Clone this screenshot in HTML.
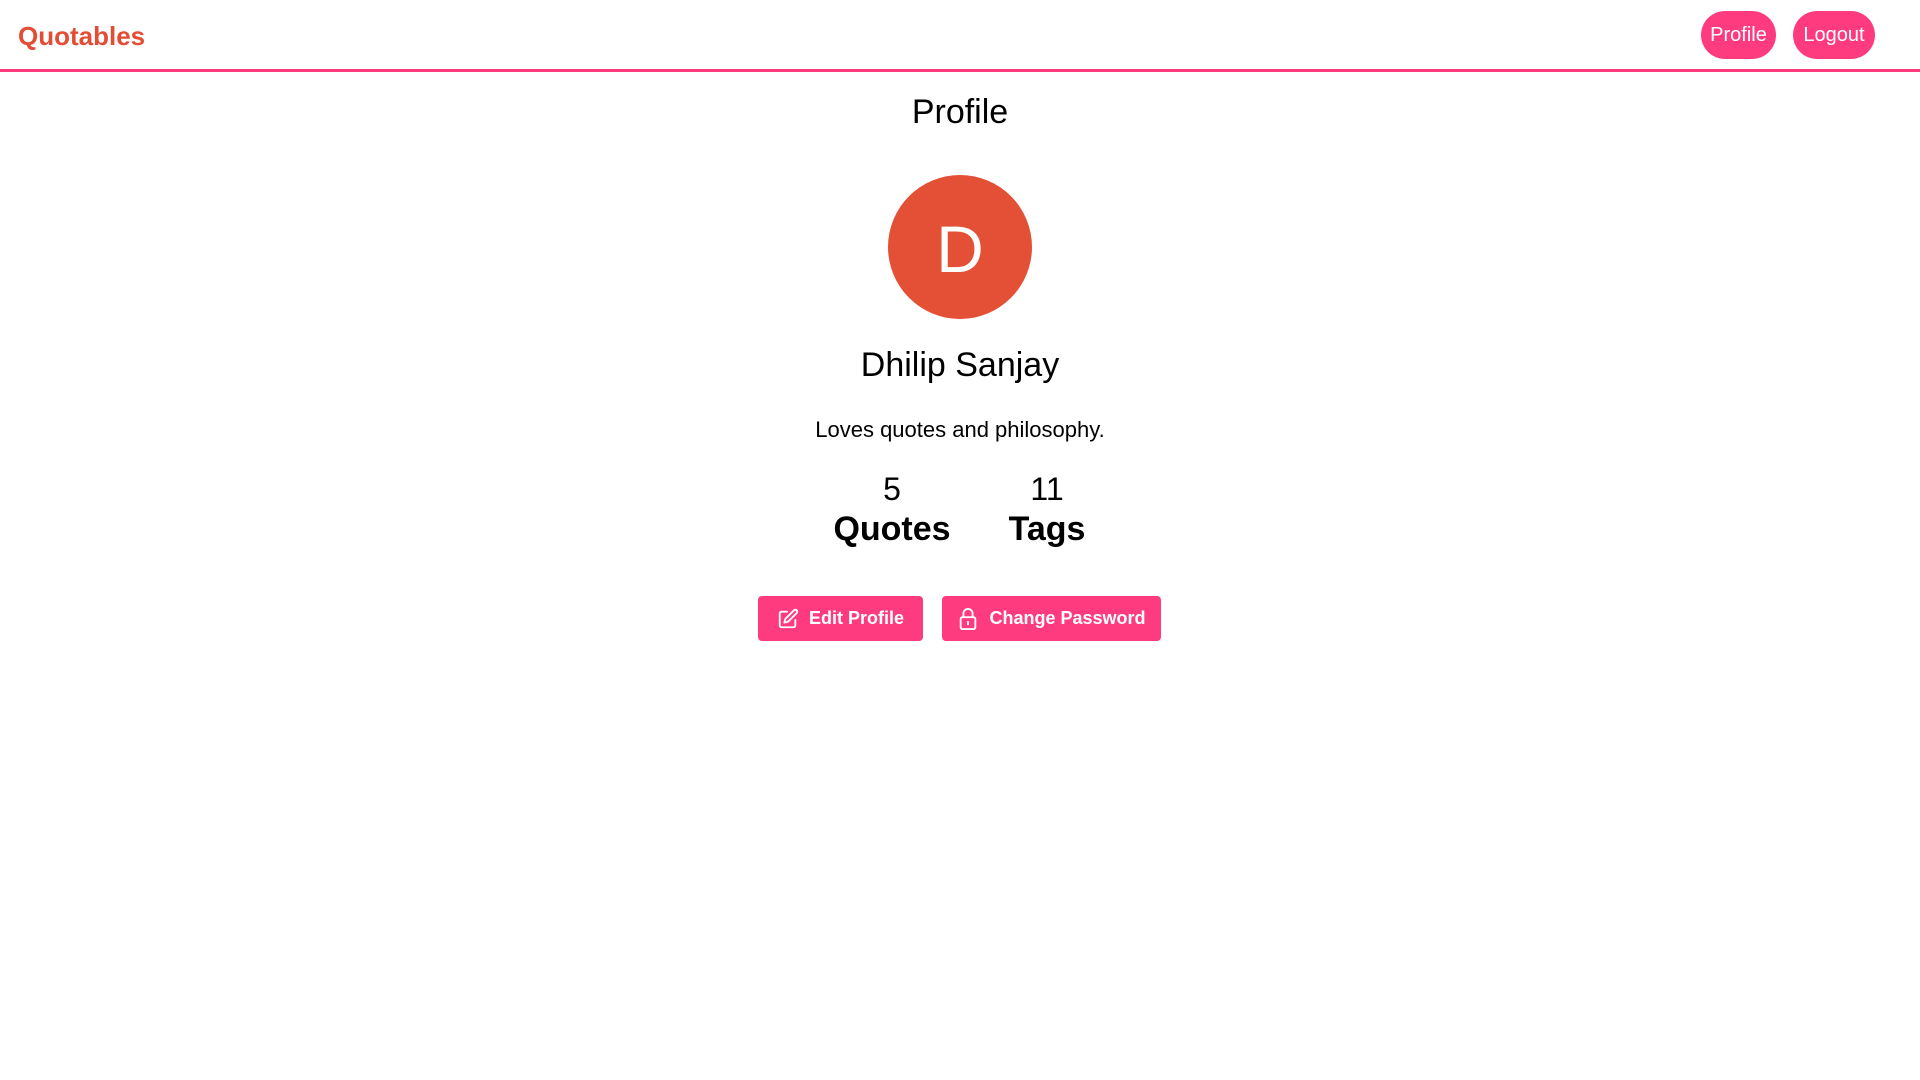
<!DOCTYPE html>
<html><head><meta charset="utf-8"><style>
*{margin:0;padding:0;box-sizing:border-box}
body{width:1920px;height:1080px;background:#fff;font-family:"Liberation Sans","DejaVu Sans",sans-serif;color:#000;position:relative;overflow:hidden}
.hdr{position:absolute;left:0;top:0;width:1920px;height:72px;border-bottom:3px solid #ff3b7f}
.logo{position:absolute;left:18px;top:21px;font-size:26px;font-weight:bold;color:#e44d35}
.nb{position:absolute;top:11px;height:48px;border-radius:24px;background:#ff3b7f;color:#fff;font-size:20px;display:flex;align-items:center;justify-content:center;padding-top:1px}
.c{position:absolute;left:0;width:1920px;text-align:center}
.av{position:absolute;left:888px;top:175px;width:144px;height:144px;border-radius:50%;background:#e45035;color:#fff;font-size:66px;display:flex;align-items:center;justify-content:center;padding-top:4px}
.st{position:absolute;text-align:center;width:200px}
.btn{position:absolute;top:596px;height:45px;background:#ff3b7f;border-radius:4px;color:#fff;font-weight:bold;font-size:18px;display:flex;align-items:center;justify-content:center;gap:10px}
</style></head><body>
<div class="hdr"><div class="logo">Quotables</div>
<div class="nb" style="left:1701px;width:75px">Profile</div>
<div class="nb" style="left:1793px;width:82px">Logout</div></div>
<div class="c" style="top:93px;font-size:34px">Profile</div>
<div class="av">D</div>
<div class="c" style="top:346px;font-size:34px">Dhilip Sanjay</div>
<div class="c" style="top:417px;font-size:22px">Loves quotes and philosophy.</div>
<div class="st" style="left:792px;top:471px;font-size:32px">5</div>
<div class="st" style="left:792px;top:510px;font-size:34px;font-weight:900">Quotes</div>
<div class="st" style="left:947px;top:471px;font-size:32px">11</div>
<div class="st" style="left:947px;top:510px;font-size:34px;font-weight:900">Tags</div>
<div class="btn" style="left:758px;width:165px">
<svg width="22" height="22" viewBox="0 0 24 24" fill="none" stroke="#fff" stroke-width="2" stroke-linecap="round" stroke-linejoin="round"><path d="M11 4H5a2 2 0 0 0-2 2v13a2 2 0 0 0 2 2h13a2 2 0 0 0 2-2v-6"/><path d="M18.5 2.5a2.1 2.1 0 0 1 3 3L12 15l-4 1 1-4z"/></svg>Edit Profile</div>
<div class="btn" style="left:942px;width:219px">
<svg width="22" height="24" viewBox="0 0 24 26" fill="none" stroke="#fff" stroke-width="2" stroke-linecap="round"><rect x="4" y="11" width="16" height="13" rx="2"/><path d="M7 11V7a5 5 0 0 1 10 0v4"/><path d="M12 16v3"/></svg>Change Password</div>
</body></html>
